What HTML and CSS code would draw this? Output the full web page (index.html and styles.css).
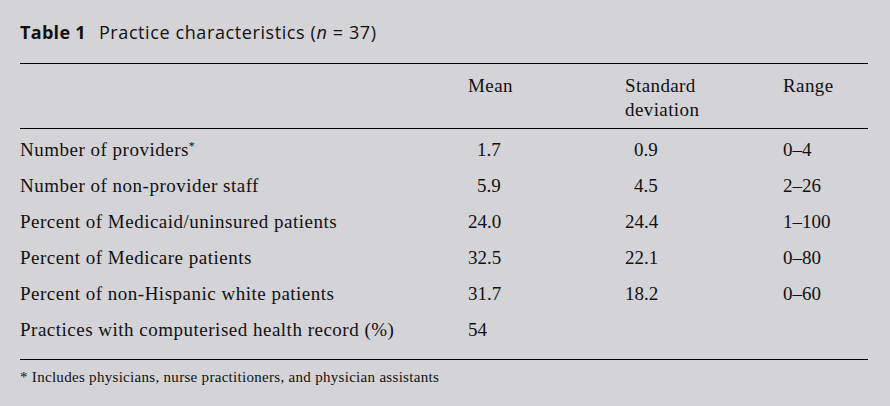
FILE: index.html
```html
<!DOCTYPE html>
<html>
<head>
<meta charset="utf-8">
<link rel="stylesheet" href="styles.css">
</head>
<body>
<div class="page">
  <div class="title"><span class="label">Table 1</span><span class="caption">Practice characteristics (<i>n</i> = 37)</span></div>
  <div class="table">
    <div class="row head">
      <div></div>
      <div>Mean</div>
      <div>Standard<br>deviation</div>
      <div>Range</div>
    </div>
    <div class="body">
      <div class="row"><div class="lbl">Number of providers<sup>*</sup></div><div class="pad">1.7</div><div class="pad">0.9</div><div>0–4</div></div>
      <div class="row"><div class="lbl">Number of non-provider staff</div><div class="pad">5.9</div><div class="pad">4.5</div><div>2–26</div></div>
      <div class="row"><div class="lbl">Percent of Medicaid/uninsured patients</div><div>24.0</div><div>24.4</div><div>1–100</div></div>
      <div class="row"><div class="lbl">Percent of Medicare patients</div><div>32.5</div><div>22.1</div><div>0–80</div></div>
      <div class="row"><div class="lbl">Percent of non-Hispanic white patients</div><div>31.7</div><div>18.2</div><div>0–60</div></div>
      <div class="row"><div class="lbl">Practices with computerised health record (%)</div><div>54</div><div></div><div></div></div>
    </div>
  </div>
  <div class="foot">* Includes physicians, nurse practitioners, and physician assistants</div>
</div>
</body>
</html>
```

FILE: styles.css
```css
html, body {
  margin: 0;
  padding: 0;
  background: #d4d3d7;
}
.page {
  width: 848px;
  padding: 20px 0 0 20px;
  color: #111;
  font-family: "Liberation Serif", "Times New Roman", serif;
}
.title {
  font-family: "Open Sans", "Liberation Sans", Arial, sans-serif;
  font-size: 18px;
  line-height: 24px;
  display: flex;
  gap: 13px;
  padding-bottom: 19px;
  border-bottom: 1px solid #000;
}
.title .label {
  font-weight: bold;
  letter-spacing: 0.3px;
}
.title .caption {
  letter-spacing: 0.6px;
}
.table {
  font-size: 19px;
  line-height: 24px;
}
.row {
  display: grid;
  grid-template-columns: 448px 157px 158px 85px;
}
.head {
  padding: 10px 0 6px;
  border-bottom: 1px solid #000;
  letter-spacing: 0.4px;
}
.body {
  padding: 3px 0 11px;
  border-bottom: 1px solid #000;
}
.body .row {
  padding: 6px 0;
}
.lbl {
  letter-spacing: 0.5px;
}
.pad {
  padding-left: 9px;
}
sup {
  font-size: 12px;
  line-height: 0;
  vertical-align: 6px;
}
.foot {
  font-size: 15px;
  line-height: 18px;
  padding-top: 8px;
  letter-spacing: 0.3px;
}
```
